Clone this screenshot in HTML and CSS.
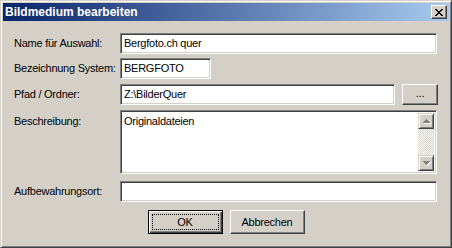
FILE: index.html
```html
<!DOCTYPE html>
<html lang="de">
<head>
<meta charset="utf-8">
<title>Bildmedium bearbeiten</title>
<link rel="stylesheet" href="styles.css">
</head>
<body>
<div class="window">
  <div class="titlebar">
    <span class="title">Bildmedium bearbeiten</span>
    <div class="close">
      <svg width="8" height="7" viewBox="0 0 8 7" shape-rendering="crispEdges">
        <g fill="#000">
          <rect x="0" y="0" width="2" height="1"/><rect x="6" y="0" width="2" height="1"/>
          <rect x="1" y="1" width="2" height="1"/><rect x="5" y="1" width="2" height="1"/>
          <rect x="2" y="2" width="4" height="1"/>
          <rect x="3" y="3" width="2" height="1"/>
          <rect x="2" y="4" width="4" height="1"/>
          <rect x="1" y="5" width="2" height="1"/><rect x="5" y="5" width="2" height="1"/>
          <rect x="0" y="6" width="2" height="1"/><rect x="6" y="6" width="2" height="1"/>
        </g>
      </svg>
    </div>
  </div>
  <div class="content">
    <div class="row r1">
      <span class="lbl">Name für Auswahl:</span>
      <div class="edit w-full">Bergfoto.ch quer</div>
    </div>
    <div class="row r2">
      <span class="lbl">Bezeichnung System:</span>
      <div class="edit w-short">BERGFOTO</div>
    </div>
    <div class="row r3">
      <span class="lbl">Pfad / Ordner:</span>
      <div class="edit w-path">Z:\BilderQuer</div>
      <div class="btn btn-browse">...</div>
    </div>
    <div class="row r4">
      <span class="lbl lbl-top">Beschreibung:</span>
      <div class="memo w-full">
        <div class="memo-text">Originaldateien</div>
        <div class="scrollbar">
          <div class="sb-btn">
            <svg width="7" height="5" viewBox="0 0 7 5" shape-rendering="crispEdges">
              <path d="M1 4h7v1H1z" fill="#fff"/>
              <path d="M3 0h1v1h1v1h1v1h1v1H0V3h1V2h1V1h1z" fill="#808080"/>
            </svg>
          </div>
          <div class="sb-track"></div>
          <div class="sb-btn">
            <svg width="7" height="5" viewBox="0 0 7 5" shape-rendering="crispEdges">
              <path d="M1 1h7v1H7v1H6v1H5v1H4V4H3V3H2V2H1z" fill="#fff"/>
              <path d="M0 0h7v1H6v1H5v1H4v1H3V3H2V2H1V1H0z" fill="#808080"/>
            </svg>
          </div>
        </div>
      </div>
    </div>
    <div class="row r5">
      <span class="lbl">Aufbewahrungsort:</span>
      <div class="edit w-full"></div>
    </div>
    <div class="actions">
      <div class="btn btn-default"><span class="focus">OK</span></div>
      <div class="btn btn-action">Abbrechen</div>
    </div>
  </div>
</div>
</body>
</html>
```

FILE: styles.css
```css
html, body {
  margin: 0;
  padding: 0;
  background: #d4d0c8;
}

body {
  font-family: "Liberation Sans", Arial, sans-serif;
  font-size: 11px;
  color: #000;
}

.window {
  box-sizing: border-box;
  width: 452px;
  height: 248px;
  background: #d4d0c8;
  border: 1px solid;
  border-color: #d4d0c8 #404040 #404040 #d4d0c8;
  box-shadow: inset 1px 1px #fff, inset -1px -1px #808080;
  padding: 2px;
  display: flex;
  flex-direction: column;
}

.titlebar {
  height: 18px;
  flex: none;
  display: flex;
  align-items: center;
  justify-content: space-between;
  background: linear-gradient(to right, #0a246a, #a6caf0);
  padding: 0 2px 0 2px;
}

.title {
  color: #fff;
  font-weight: bold;
  font-size: 12px;
  line-height: 14px;
}

.close {
  box-sizing: border-box;
  width: 16px;
  height: 14px;
  background: #d4d0c8;
  border: 1px solid;
  border-color: #fff #404040 #404040 #fff;
  box-shadow: inset -1px -1px #808080;
  display: flex;
  align-items: center;
  justify-content: center;
  padding-right: 1px;
}

.close svg { display: block; }

.content {
  flex: 1;
  padding: 12px 11px 0 11px;
  display: flex;
  flex-direction: column;
  letter-spacing: -0.25px;
}

.row {
  display: flex;
  align-items: center;
}

.r2 { margin-top: 4px; }
.r3 { margin-top: 5px; }
.r4 { margin-top: 5px; align-items: flex-start; }
.r5 { margin-top: 7px; }

.lbl {
  width: 106px;
  flex: none;
  line-height: 13px;
  white-space: nowrap;
}

.lbl-top { padding-top: 5px; }

.edit, .memo {
  box-sizing: border-box;
  background: #fff;
  border: 1px solid;
  border-color: #808080 #fff #fff #808080;
  box-shadow: inset 1px 1px #404040, inset -1px -1px #d4d0c8;
}

.edit {
  height: 21px;
  padding: 0 3px;
  line-height: 19px;
  white-space: nowrap;
  overflow: hidden;
}

.w-full { width: 317px; }
.w-short { width: 91px; }
.w-path { width: 275px; }

.memo {
  height: 64px;
  display: flex;
  padding: 2px;
}

.memo-text {
  flex: 1;
  padding: 2px 1px;
  line-height: 13px;
}

.scrollbar {
  width: 16px;
  display: flex;
  flex-direction: column;
}

.sb-btn {
  box-sizing: border-box;
  width: 16px;
  height: 16px;
  flex: none;
  background: #d4d0c8;
  border: 1px solid;
  border-color: #d4d0c8 #404040 #404040 #d4d0c8;
  box-shadow: inset 1px 1px #fff, inset -1px -1px #808080;
  display: flex;
  align-items: center;
  justify-content: center;
}

.sb-btn svg { display: block; overflow: visible; }

.sb-track {
  flex: 1;
  background: conic-gradient(#d4d0c8 25%, #fff 0 50%, #d4d0c8 0 75%, #fff 0) 0 0 / 2px 2px;
}

.btn {
  box-sizing: border-box;
  background: #d4d0c8;
  border: 1px solid;
  border-color: #fff #404040 #404040 #fff;
  box-shadow: inset -1px -1px #808080;
  display: flex;
  align-items: center;
  justify-content: center;
  line-height: 13px;
}

.btn-browse {
  width: 36px;
  height: 21px;
  margin-left: 7px;
  padding-bottom: 2px;
}

.actions {
  margin-top: 8px;
  display: flex;
  justify-content: center;
  gap: 7px;
}

.btn-action {
  width: 75px;
  height: 24px;
}

.btn-default {
  width: 75px;
  height: 24px;
  border-color: #000;
  box-shadow: inset 1px 1px #fff, inset -1px -1px #404040, inset -2px -2px #808080;
  padding: 3px;
  align-items: stretch;
}

.focus {
  flex: 1;
  border: 1px dotted #000;
  display: flex;
  align-items: center;
  justify-content: center;
}
```
